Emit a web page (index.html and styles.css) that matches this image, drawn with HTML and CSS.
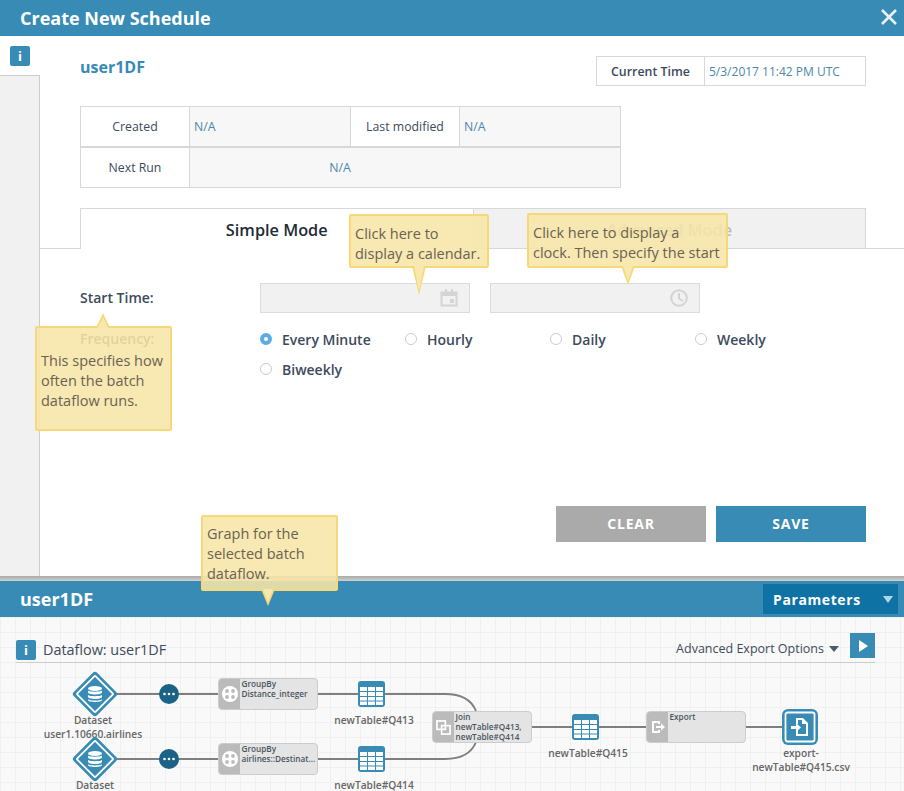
FILE: index.html
```html
<!DOCTYPE html>
<html lang="en">
<head>
<meta charset="utf-8">
<title>Create New Schedule</title>
<link rel="stylesheet" href="styles.css">
</head>
<body>
<svg class="defs" width="0" height="0" aria-hidden="true">
  <symbol id="i-table" viewBox="0 0 27 26">
    <rect x="0" y="0" width="27" height="26" rx="3" fill="#378bb4"/>
    <g fill="#fff">
      <rect x="2" y="6" width="7" height="4"/><rect x="10" y="6" width="7" height="4"/><rect x="18" y="6" width="7" height="4"/>
      <rect x="2" y="11" width="7" height="4"/><rect x="10" y="11" width="7" height="4"/><rect x="18" y="11" width="7" height="4"/>
      <rect x="2" y="16" width="7" height="3.500"/><rect x="10" y="16" width="7" height="3.500"/><rect x="18" y="16" width="7" height="3.500"/>
      <rect x="2" y="20.500" width="7" height="3.500"/><rect x="10" y="20.500" width="7" height="3.500"/><rect x="18" y="20.500" width="7" height="3.500"/>
    </g>
  </symbol>
  <symbol id="i-dataset" viewBox="0 0 48 48">
    <rect x="7.500" y="7.500" width="33" height="33" rx="3" transform="rotate(45 24 24)" fill="#378bb4"/>
    <rect x="11" y="11" width="26" height="26" rx="1" transform="rotate(45 24 24)" fill="#378bb4" stroke="#fff" stroke-width="1.800"/>
    <g fill="#fff">
      <ellipse cx="24" cy="18.500" rx="7" ry="2.500"/>
      <path d="M17 20.500c1.500 1.600 12.500 1.600 14 0v1.800c0 3-14 3-14 0z"/>
      <path d="M17 25c1.500 1.600 12.500 1.600 14 0v1.800c0 3-14 3-14 0z"/>
      <path d="M17 29.300c1.500 1.600 12.500 1.600 14 0v0.800c0 2.600-14 2.600-14 0z"/>
    </g>
  </symbol>
  <symbol id="i-dots" viewBox="0 0 20 20">
    <circle cx="10" cy="10" r="10" fill="#1a6387"/>
    <g fill="#fff"><circle cx="5.500" cy="10" r="1.300"/><circle cx="10" cy="10" r="1.300"/><circle cx="14.500" cy="10" r="1.300"/></g>
  </symbol>
  <symbol id="i-groupby" viewBox="0 0 16 16">
    <circle cx="8" cy="8" r="8" fill="#fff"/>
    <g fill="#bbb"><circle cx="5" cy="5" r="1.900"/><circle cx="11" cy="5" r="1.900"/><circle cx="5" cy="11" r="1.900"/><circle cx="11" cy="11" r="1.900"/></g>
  </symbol>
  <symbol id="i-join" viewBox="0 0 16 16">
    <g fill="none" stroke="#fff" stroke-width="1.800"><rect x="1" y="1" width="9" height="9"/><rect x="6" y="6" width="9" height="9"/></g>
  </symbol>
  <symbol id="i-export-op" viewBox="0 0 14 14">
    <path d="M1 1h8v3h-2v-1h-4v8h4v-1h2v3h-8z" fill="#fff"/>
    <path d="M5 6h5v-2.500l4 3.500-4 3.500v-2.500h-5z" fill="#fff"/>
  </symbol>
  <symbol id="i-export" viewBox="0 0 36 36">
    <rect x="0" y="0" width="36" height="36" rx="6" fill="#378bb4"/>
    <rect x="3.500" y="3.500" width="29" height="29" rx="2" fill="#378bb4" stroke="#fff" stroke-width="1.800"/>
    <path d="M14 9h7l5 5v13h-12v-6h2v4h8v-10h-4v-4h-4v4h-2z" fill="#fff"/>
    <path d="M9 17h5v-3l5 4.500-5 4.500v-3h-5z" fill="#fff"/>
  </symbol>
</svg>

<div class="app">
  <header class="titlebar">
    <h1 class="title">Create New Schedule</h1>
    <svg class="close" viewBox="0 0 16 16" width="16" height="16"><path d="M1 1l14 14M15 1l-14 14" stroke="#e8f1f6" stroke-width="2.600" fill="none"/></svg>
  </header>

  <main class="main">
    <aside class="side">
      <div class="side-top"><span class="info">i</span></div>
      <div class="side-strip"></div>
    </aside>

    <section class="content">
      <div class="pad top-row">
        <div class="df-name">user1DF</div>
        <div class="clock-box">
          <div class="clock-label">Current Time</div>
          <div class="clock-value">5/3/2017 11:42 PM UTC</div>
        </div>
      </div>

      <div class="pad">
        <div class="meta">
          <div class="meta-label">Created</div>
          <div class="meta-value">N/A</div>
          <div class="meta-label">Last modified</div>
          <div class="meta-value">N/A</div>
          <div class="meta-label meta-row2">Next Run</div>
          <div class="meta-value meta-wide">N/A</div>
        </div>
      </div>

      <div class="pad tabs">
        <div class="tab tab-active">Simple Mode</div>
        <div class="tab tab-off">Advanced Mode</div>
      </div>

      <form class="pad form">
        <div class="form-row">
          <div class="form-label">Start Time:</div>
          <div class="field">
            <svg class="field-icon" viewBox="0 0 18 18" width="18" height="18"><path d="M1.500 3.500h15v13h-15z" fill="none" stroke="#d4d4d4" stroke-width="2"/><path d="M1 3h16v4h-16zM5 0h2v3h-2zM11 0h2v3h-2zM10 10h4v4h-4z" fill="#d4d4d4"/></svg>
          </div>
          <div class="field field-2">
            <svg class="field-icon" viewBox="0 0 18 18" width="18" height="18"><circle cx="9" cy="9" r="7.800" fill="none" stroke="#d4d4d4" stroke-width="2"/><path d="M9 4v5.500l4 2.500" fill="none" stroke="#d4d4d4" stroke-width="2"/></svg>
          </div>
        </div>
        <div class="form-row freq-row">
          <div class="form-label">Frequency:</div>
          <div class="radios">
            <div class="radio-item"><span class="radio radio-on"></span>Every Minute</div>
            <div class="radio-item"><span class="radio"></span>Hourly</div>
            <div class="radio-item"><span class="radio"></span>Daily</div>
            <div class="radio-item"><span class="radio"></span>Weekly</div>
            <div class="radio-item"><span class="radio"></span>Biweekly</div>
          </div>
        </div>
        <div class="actions">
          <div class="btn btn-clear">CLEAR</div>
          <div class="btn btn-save">SAVE</div>
        </div>
      </form>
    </section>
  </main>

  <div class="divider"></div>

  <section class="panel-head">
    <div class="panel-title">user1DF</div>
    <div class="params"><span>Parameters</span><i class="params-caret"></i></div>
  </section>

  <section class="graph">
    <div class="graph-bar">
      <span class="info info-graph">i</span>
      <span class="graph-title">Dataflow: user1DF</span>
      <span class="adv">Advanced Export Options</span>
      <i class="adv-caret"></i>
      <span class="play"><i class="play-tri"></i></span>
    </div>

    <div class="dag">
      <svg class="edges" width="904" height="128" viewBox="0 0 904 128">
        <g fill="none" stroke="#7f7f7f" stroke-width="2">
          <path d="M110 29H218M318 29H445C462 29 472 36 476 46"/>
          <path d="M110 94H218M318 94H445C462 94 472 87 476 77"/>
          <path d="M532 62H646M746 62H790"/>
        </g>
      </svg>

      <svg class="node n-ds1"><use href="#i-dataset"/></svg>
      <div class="dag-label l-ds1">Dataset<br>user1.10660.airlines</div>
      <svg class="node n-ds2"><use href="#i-dataset"/></svg>
      <div class="dag-label l-ds2">Dataset</div>

      <svg class="node n-dot1"><use href="#i-dots"/></svg>
      <svg class="node n-dot2"><use href="#i-dots"/></svg>

      <div class="op op-g1">
        <div class="op-icon"><svg width="16" height="16"><use href="#i-groupby"/></svg></div>
        <div class="op-text">GroupBy<br>Distance_integer</div>
      </div>
      <div class="op op-g2">
        <div class="op-icon"><svg width="16" height="16"><use href="#i-groupby"/></svg></div>
        <div class="op-text">GroupBy<br>airlines::Destinat...</div>
      </div>
      <div class="op op-join">
        <div class="op-icon"><svg width="15" height="15"><use href="#i-join"/></svg></div>
        <div class="op-text">Join<br>newTable#Q413,<br>newTable#Q414</div>
      </div>
      <div class="op op-exp">
        <div class="op-icon"><svg width="14" height="14"><use href="#i-export-op"/></svg></div>
        <div class="op-text">Export</div>
      </div>

      <svg class="node n-t1"><use href="#i-table"/></svg>
      <div class="dag-label l-t1">newTable#Q413</div>
      <svg class="node n-t2"><use href="#i-table"/></svg>
      <div class="dag-label l-t2">newTable#Q414</div>
      <svg class="node n-t3"><use href="#i-table"/></svg>
      <div class="dag-label l-t3">newTable#Q415</div>
      <svg class="node n-ex"><use href="#i-export"/></svg>
      <div class="dag-label l-ex">export-<br>newTable#Q415.csv</div>
    </div>
  </section>

  <div class="tip tip-cal">Click here to display a calendar.<i class="tail tail-down"></i></div>
  <div class="tip tip-clock">Click here to display a<br>clock. Then specify the start<i class="tail tail-down"></i></div>
  <div class="tip tip-freq"><i class="tail tail-up"></i>This specifies how often the batch dataflow runs.</div>
  <div class="tip tip-graph">Graph for the selected batch dataflow.<i class="tail tail-down"></i></div>
</div>
</body>
</html>
```

FILE: styles.css
```css
* { box-sizing: border-box; }
html, body { margin: 0; padding: 0; }
body {
  font-family: "Open Sans", "Noto Sans", sans-serif;
  font-size: 14px;
  color: #3d4a5c;
  background: #fff;
  overflow: hidden;
}
.defs { position: absolute; }
.app {
  position: relative;
  width: 904px;
  height: 791px;
  display: flex;
  flex-direction: column;
  overflow: hidden;
}

/* title bar */
.titlebar {
  flex: 0 0 36px;
  background: #378bb4;
  display: flex;
  align-items: center;
  justify-content: space-between;
  padding: 0 7px 0 20px;
}
.title { margin: 0; font-size: 18px; font-weight: 700; color: #fff; }
.close { display: block; margin-top: -3px; }

/* main dialog */
.main { flex: 0 0 540px; display: flex; }
.side { flex: 0 0 40px; display: flex; flex-direction: column; }
.side-top { flex: 0 0 39px; padding: 10px 0 0 10px; }
.side-strip {
  flex: 1;
  background: #f1f1f1;
  border-top: 1px solid #ccc;
  border-right: 1px solid #ccc;
}
.info {
  display: block;
  width: 20px;
  height: 20px;
  background: #378bb4;
  border-radius: 2px;
  color: #fff;
  font-size: 13px;
  font-weight: 700;
  line-height: 20px;
  text-align: center;
}
.content { flex: 1; display: flex; flex-direction: column; min-width: 0; }
.pad { padding: 0 38px 0 40px; }

.top-row { display: flex; justify-content: space-between; padding-top: 20px; }
.df-name { color: #378bb4; font-size: 16px; font-weight: 700; line-height: 22px; }
.clock-box {
  display: flex;
  width: 270px;
  height: 30px;
  border: 1px solid #d8d8d8;
  font-size: 12px;
  line-height: 30px;
}
.clock-label {
  flex: 0 0 108px;
  border-right: 1px solid #d8d8d8;
  text-align: center;
  font-size: 12.400px;
  font-weight: 600;
}
.clock-value { padding-left: 4px; color: #4a88ad; white-space: nowrap; }

.meta {
  margin-top: 20px;
  width: 541px;
  height: 82px;
  display: grid;
  grid-template-columns: 109px 161px 109px 1fr;
  grid-template-rows: 41px 39px;
  border: 1px solid #d8d8d8;
  font-size: 12.300px;
  line-height: 40px;
}
.meta-label { text-align: center; background: #fff; border-right: 1px solid #d8d8d8; border-bottom: 2px solid #d8d8d8; }
.meta-value { padding-left: 4px; color: #4a88ad; background: #f7f7f7; border-bottom: 2px solid #d8d8d8; border-right: 1px solid #d8d8d8; }
.meta-value:nth-child(4) { border-right: 0; }
.meta-row2 { border-bottom: 0; }
.meta-wide { grid-column: 2 / 5; text-align: center; padding: 0 130px 0 0; border: 0; }

.tabs {
  margin-top: 20px;
  display: flex;
  height: 41px;
  border-bottom: 1px solid #d8d8d8;
}
.tab {
  flex: 1;
  height: 41px;
  border: 1px solid #d8d8d8;
  border-bottom: 0;
  text-align: center;
  font-size: 16.300px;
  font-weight: 600;
  line-height: 42px;
}
.tab-active { background: #fff; color: #222b36; border-right: 0; position: relative; }
.tab-off { background: #f1f1f1; color: #bbb; height: 40px; }

.form { flex: 1; display: flex; flex-direction: column; padding-top: 34px; padding-bottom: 34px; }
.form-row { display: flex; }
.form-label { flex: 0 0 180px; font-weight: 600; line-height: 30px; }
.field {
  position: relative;
  width: 210px;
  height: 30px;
  background: #f1f1f1;
  border: 1px solid #dcdcdc;
}
.field-2 { margin-left: 20px; }
.field-icon { position: absolute; right: 11px; top: 5px; }
.freq-row { margin-top: 11px; }
.radios { display: flex; flex-wrap: wrap; width: 580px; }
.radio-item {
  flex: 0 0 145px;
  height: 30px;
  display: flex;
  align-items: center;
  font-weight: 600;
  font-size: 14px;
}
.radio {
  width: 12px;
  height: 12px;
  margin-right: 10px;
  border-radius: 50%;
  background: #fff;
  border: 1px solid #ccc;
}
.radio-on { border: 4px solid #59ade4; }
.actions { margin-top: auto; display: flex; justify-content: flex-end; gap: 10px; }
.btn {
  width: 150px;
  height: 36px;
  color: #fff;
  text-align: center;
  font-weight: 700;
  font-size: 14px;
  letter-spacing: 0.800px;
  line-height: 36px;
}
.btn-clear { background: #aaa; }
.btn-save { background: #378bb4; }

/* bottom panel */
.divider { flex: 0 0 5px; background: linear-gradient(#a8a8a8, #d0d0d0); }
.panel-head {
  flex: 0 0 36px;
  background: #378bb4;
  display: flex;
  align-items: center;
  justify-content: space-between;
  padding: 0 6px 0 20px;
}
.panel-title { color: #fff; font-size: 18px; font-weight: 700; }
.params {
  width: 135px;
  height: 30px;
  background: #0f72a5;
  display: flex;
  align-items: center;
  justify-content: space-between;
  padding: 0 5px 0 10px;
  color: #fff;
  font-weight: 700;
  font-size: 14px;
  letter-spacing: 0.600px;
}
.params-caret {
  border-left: 5.500px solid transparent;
  border-right: 5.500px solid transparent;
  border-top: 7px solid #b5d5e6;
}

.graph {
  flex: 1;
  position: relative;
  background-color: #f9f9f9;
  background-image:
    linear-gradient(#f0f0f0 1px, transparent 1px),
    linear-gradient(90deg, #f0f0f0 1px, transparent 1px);
  background-size: 15px 15px;
  min-height: 0;
}
.graph-bar {
  margin: 16px 29px 0 16px;
  height: 30px;
  display: flex;
  align-items: flex-start;
  border-bottom: 1px solid #ccc;
}
.info-graph { margin-top: 7px; }
.graph-title { margin-left: 7px; font-size: 14.400px; line-height: 34px; }
.adv { margin-left: auto; font-size: 12.500px; line-height: 31px; }
.adv-caret {
  margin: 13px 11px 0 5px;
  border-left: 5px solid transparent;
  border-right: 5px solid transparent;
  border-top: 6px solid #4d5a68;
}
.play {
  width: 25px;
  height: 25px;
  background: #378bb4;
  display: flex;
  align-items: center;
  justify-content: center;
}
.play-tri {
  margin-left: 2px;
  border-top: 6.500px solid transparent;
  border-bottom: 6.500px solid transparent;
  border-left: 9px solid #fff;
}

/* dag canvas: nodes at their own coordinates, origin y=663 */
.dag { position: absolute; left: 0; top: 46px; width: 904px; height: 128px; }
.edges { position: absolute; left: 0; top: 2px; }
.node { position: absolute; display: block; }
.n-ds1, .n-ds2 { left: 71px; width: 48px; height: 48px; }
.n-ds1 { top: 7px; }
.n-ds2 { top: 72px; }
.n-dot1, .n-dot2 { left: 159px; width: 20px; height: 20px; }
.n-dot1 { top: 21px; }
.n-dot2 { top: 86px; }
.n-t1, .n-t2, .n-t3 { width: 27px; height: 26px; }
.n-t1 { left: 358px; top: 18px; }
.n-t2 { left: 358px; top: 83px; }
.n-t3 { left: 572px; top: 51px; }
.n-ex { left: 782px; top: 46px; width: 36px; height: 36px; }

.dag-label {
  position: absolute;
  width: 160px;
  text-align: center;
  font-size: 10.200px;
  font-weight: 600;
  line-height: 14px;
  color: #666;
}
.l-ds1 { left: 13px; top: 50px; }
.l-ds2 { left: 15px; top: 115px; }
.l-t1 { left: 294px; top: 50px; }
.l-t2 { left: 294px; top: 115px; }
.l-t3 { left: 508px; top: 83px; }
.l-ex { left: 721px; top: 83px; }

.op {
  position: absolute;
  width: 100px;
  height: 32px;
  display: flex;
  background: #e4e4e4;
  border: 1px solid #ccc;
  border-radius: 4px;
  overflow: hidden;
}
.op-g1 { left: 218px; top: 15px; }
.op-g2 { left: 218px; top: 80px; }
.op-join { left: 432px; top: 48px; }
.op-exp { left: 646px; top: 48px; }
.op-icon {
  flex: 0 0 21px;
  background: #bbb;
  display: flex;
  align-items: center;
  justify-content: center;
}
.op-icon svg { display: block; }
.op-text {
  padding: 0 0 0 1.500px;
  font-size: 8.200px;
  font-weight: 600;
  line-height: 10px;
  color: #4a5560;
  white-space: nowrap;
}

/* tooltips */
.tip {
  position: absolute;
  background: rgba(247, 229, 167, 0.88);
  border: 2px solid #f7d878;
  border-radius: 2px;
  padding: 8px 0 0 4px;
  font-size: 14.500px;
  line-height: 20px;
  color: #6a6252;
}
.tip-cal { left: 349px; top: 214px; width: 140px; height: 54px; }
.tip-clock { left: 527px; top: 213px; width: 201px; height: 55px; white-space: nowrap; }
.tip-freq { left: 35px; top: 326px; width: 137px; height: 105px; padding-top: 23px; }
.tip-graph { left: 201px; top: 515px; width: 137px; height: 76px; padding-top: 7px; }
.tail { position: absolute; display: block; width: 14px; background: #f7d878; }
.tail::after {
  content: "";
  position: absolute;
  left: 2px;
  right: 2px;
  background: #f8e8ae;
}
.tail-down { top: 100%; clip-path: polygon(0 0, 100% 0, 50% 100%); }
.tail-down::after { top: 0; bottom: 4px; clip-path: polygon(0 0, 100% 0, 50% 100%); }
.tail-up { bottom: 100%; left: 59px; height: 15px; clip-path: polygon(50% 0, 100% 100%, 0 100%); }
.tail-up::after { top: 4px; bottom: 0; clip-path: polygon(50% 0, 100% 100%, 0 100%); }
.tip-cal .tail-down { left: 61px; height: 29px; }
.tip-clock .tail-down { left: 92px; height: 19px; }
.tip-graph .tail-down { left: 58px; height: 17px; }
```
